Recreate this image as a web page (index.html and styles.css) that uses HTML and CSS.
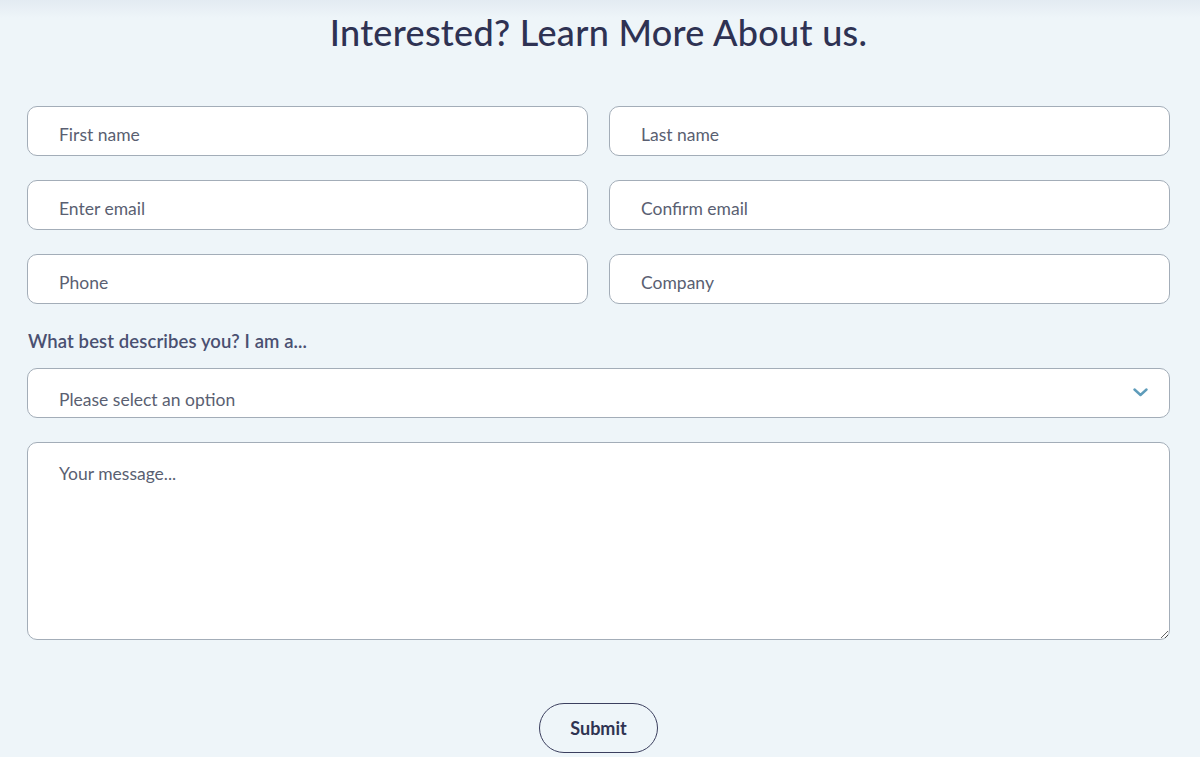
FILE: index.html
```html
<!DOCTYPE html>
<html lang="en">
<head>
<meta charset="utf-8">
<title>Contact</title>
<link rel="stylesheet" href="styles.css">
</head>
<body>
<div class="topshade"></div>
<main class="page">
  <h1 class="title">Interested? Learn More About us.</h1>
  <form class="form">
    <div class="grid">
      <input class="field" type="text" placeholder="First name">
      <input class="field" type="text" placeholder="Last name">
      <input class="field" type="email" placeholder="Enter email">
      <input class="field" type="email" placeholder="Confirm email">
      <input class="field" type="tel" placeholder="Phone">
      <input class="field" type="text" placeholder="Company">
    </div>
    <label class="label">What best describes you? I am a...</label>
    <div class="select">
      <span class="select-text">Please select an option</span>
      <svg class="chev" width="15" height="9" viewBox="0 0 15 9"><path d="M1.5 1.5 L7.5 7 L13.5 1.5" fill="none" stroke="#5e9cba" stroke-width="2.4" stroke-linecap="round" stroke-linejoin="round"/></svg>
    </div>
    <textarea class="message" placeholder="Your message..."></textarea>
    <div class="actions">
      <button class="submit" type="button">Submit</button>
    </div>
  </form>
</main>
</body>
</html>
```
FILE: styles.css
```css
* { box-sizing: border-box; }
html, body { margin: 0; padding: 0; }
body {
  background: #eef5f9;
  font-family: Lato, "Open Sans", sans-serif;
  color: #2f3352;
  height: 757px;
  overflow: hidden;
  position: relative;
}
.topshade {
  position: absolute;
  left: 0; right: 0; top: 0;
  height: 18px;
  background: linear-gradient(#e3ebf2, rgba(238,245,249,0));
  pointer-events: none;
}
.page {
  padding: 0 30px 0 27px;
}
.title {
  margin: 0;
  padding-top: 12px;
  text-align: center;
  font-size: 36px;
  font-weight: 500;
  line-height: 40px;
  color: #2e3253;
  letter-spacing: 0.3px;
}
.form {
  margin-top: 54px;
}
.grid {
  display: grid;
  grid-template-columns: 1fr 1fr;
  column-gap: 21px;
  row-gap: 24px;
}
.field, .select, .message {
  display: block;
  width: 100%;
  background: #fff;
  border: 1px solid #a3adb8;
  border-radius: 10px;
  font-family: inherit;
  font-size: 17.5px;
  color: #4d5166;
}
.field {
  height: 50px;
  padding: 7px 31px 0;
  outline: none;
}
.field::placeholder, .message::placeholder { color: #5a5f72; }
.label {
  display: block;
  margin-top: 27px;
  padding-left: 1px;
  font-size: 18.5px;
  font-weight: 600;
  color: #4a5071;
  line-height: 20px;
  letter-spacing: 0.1px;
}
.select {
  margin-top: 17px;
  height: 50px;
  display: flex;
  align-items: center;
  justify-content: space-between;
  padding: 13px 21px 0 31px;
}
.select-text { color: #5a5f72; }
.chev { margin-top: -14px; }
.message {
  margin-top: 24px;
  height: 198px;
  padding: 20px 31px;
  resize: vertical;
  outline: none;
}
.actions {
  display: flex;
  justify-content: center;
  margin-top: 63px;
}
.submit {
  width: 119px;
  height: 50px;
  border: 1px solid #3b3f5e;
  border-radius: 25px;
  background: transparent;
  font-family: Lato, sans-serif;
  font-weight: 700;
  font-size: 18px;
  color: #2f3352;
}
```
